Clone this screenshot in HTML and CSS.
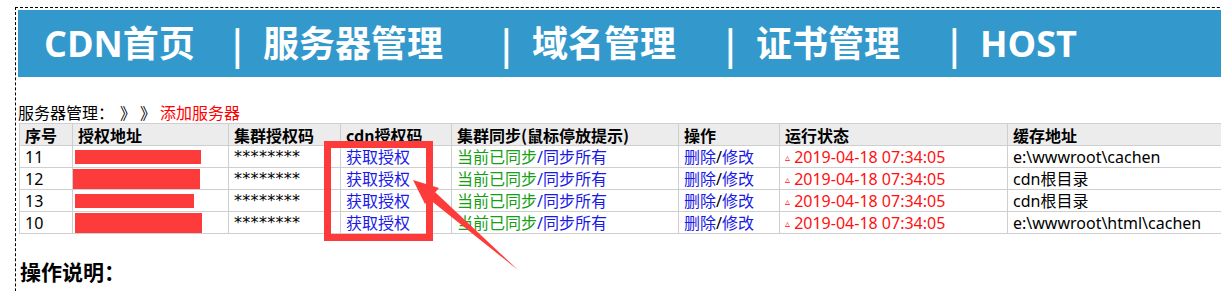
FILE: index.html
```html
<!DOCTYPE html>
<html lang="zh-CN">
<head>
<meta charset="utf-8">
<title>服务器管理</title>
<link rel="stylesheet" href="styles.css">
</head>
<body>
<div class="frame">
  <div class="banner">
    <a class="nav n1">CDN首页</a><span class="pipe">|</span>
    <a class="nav n2">服务器管理</a><span class="pipe">|</span>
    <a class="nav n3">域名管理</a><span class="pipe">|</span>
    <a class="nav n4">证书管理</a><span class="pipe">|</span>
    <a class="nav n5">HOST</a>
  </div>
  <div class="crumb">服务器管理：<span class="gt first">》</span><span class="gt">》</span><a class="add">添加服务器</a></div>
  <table class="grid">
    <colgroup>
      <col class="c1"><col class="c2"><col class="c3"><col class="c4"><col class="c5"><col class="c6"><col class="c7"><col class="c8">
    </colgroup>
    <thead>
      <tr><th>序号</th><th>授权地址</th><th>集群授权码</th><th>cdn授权码</th><th>集群同步(鼠标停放提示)</th><th>操作</th><th>运行状态</th><th>缓存地址</th></tr>
    </thead>
    <tbody>
      <tr><td>11</td><td class="addr"><span class="redact r1"></span></td><td class="stars">********</td><td><a class="blue">获取授权</a></td><td><span class="green">当前已同步</span><a class="blue">/同步所有</a></td><td><a class="blue">删除</a>/<a class="blue">修改</a></td><td class="status"><span class="tri">▵</span> 2019-04-18 07:34:05</td><td>e:\wwwroot\cachen</td></tr>
      <tr><td>12</td><td class="addr"><span class="redact r2"></span></td><td class="stars">********</td><td><a class="blue">获取授权</a></td><td><span class="green">当前已同步</span><a class="blue">/同步所有</a></td><td><a class="blue">删除</a>/<a class="blue">修改</a></td><td class="status"><span class="tri">▵</span> 2019-04-18 07:34:05</td><td>cdn根目录</td></tr>
      <tr><td>13</td><td class="addr"><span class="redact r3"></span></td><td class="stars">********</td><td><a class="blue">获取授权</a></td><td><span class="green">当前已同步</span><a class="blue">/同步所有</a></td><td><a class="blue">删除</a>/<a class="blue">修改</a></td><td class="status"><span class="tri">▵</span> 2019-04-18 07:34:05</td><td>cdn根目录</td></tr>
      <tr><td>10</td><td class="addr"><span class="redact r4"></span></td><td class="stars">********</td><td><a class="blue">获取授权</a></td><td><span class="green">当前已同步</span><a class="blue">/同步所有</a></td><td><a class="blue">删除</a>/<a class="blue">修改</a></td><td class="status"><span class="tri">▵</span> 2019-04-18 07:34:05</td><td>e:\wwwroot\html\cachen</td></tr>
    </tbody>
  </table>
  <h3 class="help">操作说明：</h3>
</div>
<svg class="annot" width="1221" height="291" viewBox="0 0 1221 291">
  <rect x="327.5" y="144.5" width="102" height="93" fill="none" stroke="#fd3b3b" stroke-width="7"/>
  <polygon points="413,180 425,204 439,188" fill="#fd3b3b"/>
  <polygon points="429,199 435,192 518,270" fill="#fd3b3b"/>
</svg>
</body>
</html>
```

FILE: styles.css
```css
html, body {
  margin: 0;
  padding: 0;
  overflow: hidden;
  background: #fff;
}
body {
  font-family: "Noto Sans", "Noto Sans CJK SC", sans-serif;
  font-size: 16px;
  color: #000;
  position: relative;
  width: 1221px;
  height: 291px;
}
.frame {
  margin: 7px 0 0 15px;
  width: 1300px;
  height: 400px;
  border: 1px dashed #000;
  padding: 2px 0 0 2px;
  box-sizing: border-box;
}
.banner {
  background: #3399cc;
  height: 67px;
  display: flex;
  align-items: center;
  padding-left: 26px;
  color: #fff;
  font-weight: bold;
  font-size: 36px;
  line-height: 67px;
  font-family: "Open Sans", "Noto Sans CJK SC", sans-serif;
}
.nav { color: #fff; text-decoration: none; }
.pipe { font-family: "Noto Sans CJK SC", sans-serif; font-weight: bold; }
.n1 { width: 188px; }
.n2 { width: 238px; }
.n3 { width: 193px; }
.n4 { width: 193px; }
.n1 + .pipe, .n2 + .pipe, .n3 + .pipe, .n4 + .pipe { width: 31px; }
.crumb {
  margin-top: 24px;
  height: 22px;
  line-height: 22px;
  font-size: 16px;
  font-family: "Noto Sans CJK SC", sans-serif;
}
.gt { display: inline-block; width: 20px; }
.gt.first { margin-left: 6px; }
.add { color: #ff0000; }
.grid {
  margin-left: 1px;
  border-collapse: collapse;
  table-layout: fixed;
  width: 1260px;
  font-family: "Noto Sans", "Noto Sans CJK SC", sans-serif;
}
.c1 { width: 53px; }
.c2 { width: 156px; }
.c3 { width: 112px; }
.c4 { width: 111px; }
.c5 { width: 227px; }
.c6 { width: 101px; }
.c7 { width: 228px; }
.c8 { width: 272px; }
.grid th, .grid td {
  border: 1px solid #cfcfcf;
  padding: 0 5px;
  height: 21px;
  line-height: 20px;
  text-align: left;
  white-space: nowrap;
  overflow: hidden;
  vertical-align: middle;
}
.grid th {
  background: #ececec;
  font-weight: bold;
  font-family: "Noto Sans CJK SC", sans-serif;
}
.grid td { font-size: 16px; }
.addr { padding: 0 !important; }
.redact { display: block; background: #fd3b3b; }
.r1 { margin: 1px 0 0 2px; width: 126px; height: 14px; }
.r2 { margin: 1px 0 0 -1px; width: 128px; height: 20px; }
.r3 { margin: 0 0 0 2px; width: 119px; height: 14px; }
.r4 { margin: 1px 0 0 2px; width: 127px; height: 20px; }
.stars { font-size: 13px; letter-spacing: 0.3px; font-family: "DejaVu Sans", sans-serif; }
.blue { color: #1a1ae6; text-decoration: none; }
.green { color: #14a014; }
.status { color: #ff1010; }
.tri { font-size: 10px; vertical-align: 2px; }
.help {
  margin: 22px 0 0 2px;
  font-size: 21px;
  font-weight: bold;
  font-family: "Noto Sans CJK SC", sans-serif;
}
.annot {
  position: absolute;
  left: 0;
  top: 0;
  pointer-events: none;
}
```
